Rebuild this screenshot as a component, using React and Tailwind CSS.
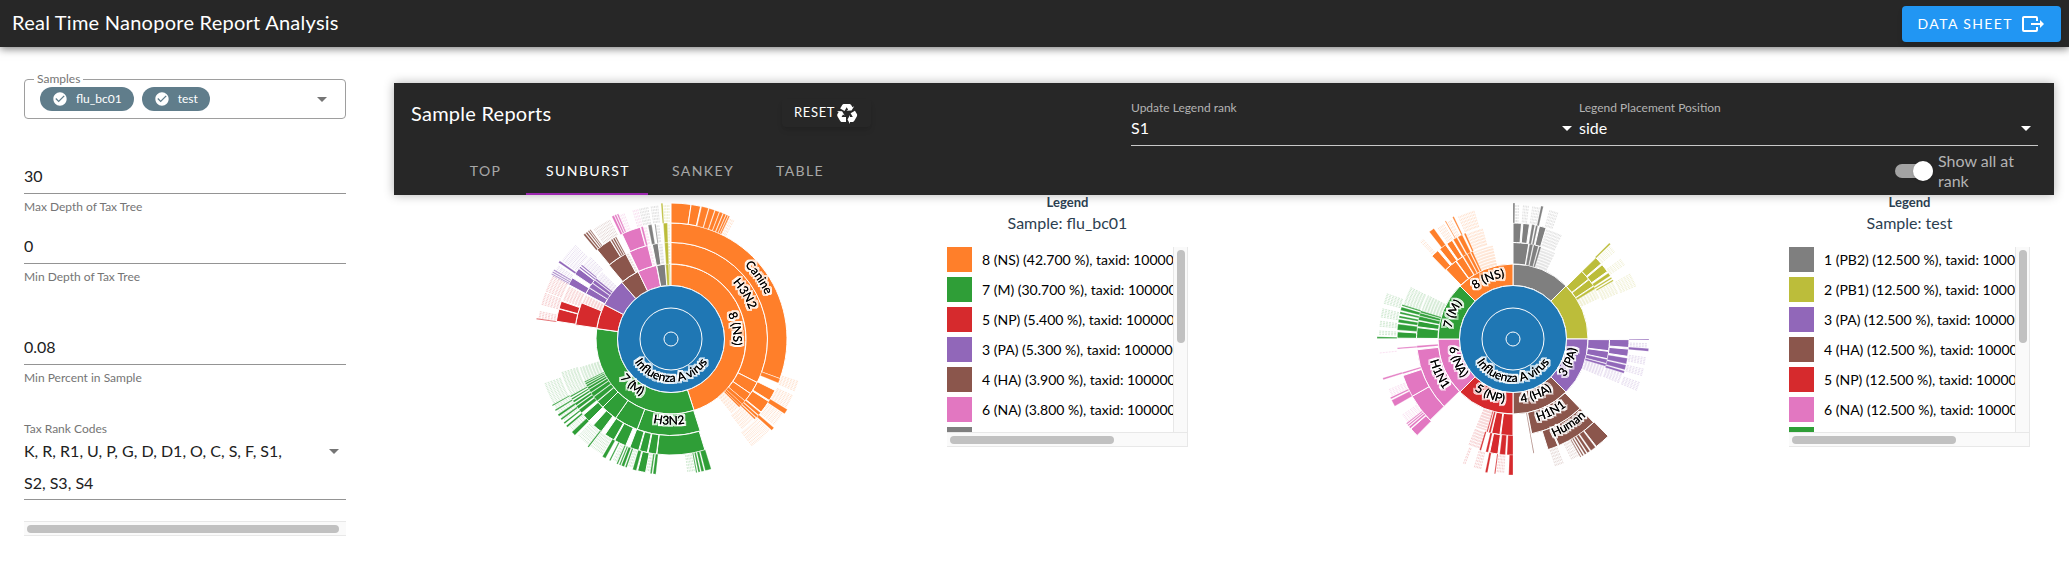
import React from "react";

const ICONS = {
  export:
    "M23,12L19,8V11H10V13H19V16M1,18V6C1,4.89 1.9,4 3,4H15A2,2 0 0,1 17,6V9H15V6H3V18H15V15H17V18A2,2 0 0,1 15,20H3A2,2 0 0,1 1,18Z",
  recycle:
    "M21.82,15.42L19.32,19.75C18.83,20.61 17.92,21.06 17,21H15V23L12.5,18.5L15,14V16H17.82L15.6,12.15L19.93,9.65L21.73,12.77C22.25,13.54 22.32,14.57 21.82,15.42M9.21,3.06H14.21C15.19,3.06 16.04,3.63 16.45,4.45L17.45,6.19L19.18,5.19L16.54,9.6L11.39,9.69L13.12,8.69L11.71,6.24L9.5,10.09L5.16,7.59L6.96,4.47C7.37,3.64 8.22,3.06 9.21,3.06M5.05,19.76L2.55,15.43C2.06,14.58 2.13,13.56 2.64,12.79L3.64,11.06L1.91,10.06L7.05,10.14L9.7,14.56L7.97,13.56L6.56,16H11V21H7.4C6.47,21.07 5.55,20.61 5.05,19.76Z",
  check:
    "M12 2C6.5 2 2 6.5 2 12S6.5 22 12 22 22 17.5 22 12 17.5 2 12 2M10 17L5 12L6.41 10.59L10 14.17L17.59 6.58L19 8L10 17Z",
  menuDown: "M7,10L12,15L17,10H7Z",
};

function Icon({ name, className }) {
  return (
    <svg viewBox="0 0 24 24" fill="currentColor" aria-hidden="true" className={className}>
      <path d={ICONS[name]} />
    </svg>
  );
}

const BLUE = "#1f77b4";
const ORANGE = "#ff7f2a";
const GREEN = "#2f9e37";
const RED = "#d62a2d";
const PURPLE = "#9167b9";
const BROWN = "#8b564c";
const PINK = "#e277c1";
const GRAY = "#7f7f7f";
const OLIVE = "#bcbd3a";

const RADII = [53.5, 75, 96.5, 116, 136];

// cells: one list per ring, [startDeg, endDeg]; fringe: [ring, startDeg, endDeg]
const FLU = [
  {
    color: ORANGE,
    cells: [
      [[0, 162.1]],
      [[0, 116.8], [116.8, 124.5], [124.5, 130], [130, 132.4], [132.4, 134], [134, 135]],
      [[0, 110], [110, 112.3], [116.3, 122], [122.6, 129], [129.5, 131], [131.4, 132.6], [133, 133.8]],
      [[0, 8.5], [8.5, 12.6], [13, 16], [16.3, 18.7], [19, 20.8], [21, 22.4], [22.7, 23.8], [24, 24.8], [25, 25.6], [121.2, 123.4], [130.8, 132.2]],
    ],
    fringe: [[3, 25.8, 28], [1, 135, 141], [2, 133.8, 142], [3, 108.5, 113], [3, 115, 121], [3, 124, 130], [3, 133, 143]],
  },
  {
    color: GREEN,
    cells: [
      [[162.1, 277.9]],
      [[162.4, 200.5], [200.5, 215], [215, 225], [225, 229.6], [230, 233], [233.4, 236], [236.4, 238.2], [238.6, 240], [240.4, 241.5], [241.9, 242.8], [243.2, 243.9]],
      [[163, 187], [187.2, 191.4], [191.8, 195.8], [196.2, 200.8], [203, 209], [209.5, 214.6], [217, 222], [225, 229], [230.5, 232.4], [233, 234.6], [235, 236.2], [236.8, 237.8], [238.4, 239.2], [239.8, 240.5]],
      [[162.8, 165.4], [165.9, 167.1], [167.6, 168.4], [168.9, 169.4], [186.4, 187.6], [188.1, 188.8], [190.8, 194.2], [194.8, 196.4], [199, 199.7], [200.2, 201.4], [201.8, 202.4], [203, 203.6], [206.4, 207], [208.8, 210.3], [217.2, 217.8], [225, 226.8], [229.6, 230.4], [231.4, 232.1], [233.5, 234.2], [235.4, 236.3], [238, 238.6], [240.5, 241]],
    ],
    fringe: [[1, 244, 253], [2, 241, 253], [3, 170, 173], [3, 189, 190.5], [3, 197, 199], [3, 204, 206], [3, 211, 217], [3, 218, 224], [3, 227, 229.4], [3, 233, 251]],
  },
  {
    color: RED,
    cells: [
      [[278, 297.3]],
      [[278.4, 292]],
      [[278.8, 285], [285.2, 289]],
      [[278.4, 278.8]],
    ],
    fringe: [[1, 292, 297], [2, 290, 297], [3, 279, 282], [3, 285, 290], [3, 291, 298]],
  },
  {
    color: PURPLE,
    cells: [
      [[297.3, 319]],
      [[298, 302], [302.3, 305.2], [305.6, 307.6], [308, 309]],
      [[298, 301.8], [304, 307.4], [307.9, 308.6], [309.2, 309.8]],
      [[298.4, 298.8], [299.3, 299.7], [300.3, 300.7], [304.2, 305.1]],
    ],
    fringe: [[1, 309, 314], [2, 309.8, 316], [3, 298, 303], [3, 306, 315]],
  },
  {
    color: BROWN,
    cells: [
      [[319, 334]],
      [[320, 332]],
      [[320.4, 328.4], [328.8, 329.6], [330, 330.8], [331.2, 331.8]],
      [[320, 320.8], [321.2, 321.9], [322.4, 322.9], [323.3, 323.7]],
    ],
    fringe: [[1, 332, 334], [3, 325, 333]],
  },
  {
    color: PINK,
    cells: [
      [[334, 348.8]],
      [[334.5, 346]],
      [[335, 344.6], [345, 346]],
      [[334.2, 335.2], [335.5, 336.2], [336.6, 337.2]],
    ],
    fringe: [[1, 346, 348], [2, 346, 348], [3, 337.4, 339.5], [3, 343.5, 346]],
  },
  {
    color: GRAY,
    cells: [
      [[349, 355.5]],
      [[348.8, 352.3]],
      [[348.6, 350.4], [351.9, 352.4]],
      [],
    ],
    fringe: [[1, 352.4, 355], [2, 352.5, 354], [3, 346.5, 350], [3, 351.5, 354.5]],
  },
  {
    color: OLIVE,
    cells: [
      [[356, 358.2], [358.6, 359.3]],
      [[356.2, 358.3]],
      [[356.2, 358.2]],
      [[355.8, 356.5]],
    ],
    fringe: [[1, 358.4, 359.4], [2, 358.4, 359.4], [3, 357, 359.4]],
  },
];

const TEST = [
  {
    color: GRAY,
    cells: [
      [[0, 45]],
      [[0, 9.4], [9.9, 12], [12.5, 15.3], [15.8, 17]],
      [[0, 4.2], [4.9, 8.2], [9.4, 10.8], [11.4, 12.4], [13.2, 16.6]],
      [[0, 0.8], [11.9, 12.9]],
    ],
    fringe: [[1, 17.4, 26], [2, 17.2, 25], [3, 1, 3], [3, 4.5, 7], [3, 8.5, 11.4], [3, 16, 20]],
  },
  {
    color: OLIVE,
    cells: [
      [[45, 90]],
      [[45.5, 51.6], [52, 56.6], [57.1, 58.6]],
      [[45.5, 49.5], [50.2, 54.4], [55.3, 57], [57.8, 58.6], [59.3, 60]],
      [[45.1, 45.8]],
    ],
    fringe: [[1, 58.8, 65], [2, 60, 67], [3, 46.5, 50], [3, 53.5, 57], [3, 61, 67]],
  },
  {
    color: PURPLE,
    cells: [
      [[90, 135]],
      [[90.4, 97], [97.4, 101.8], [102.2, 104.6], [105, 106.4]],
      [[90.3, 94.2], [95, 98.6], [99.5, 102.4], [103, 105.4], [106, 107.2]],
      [[90, 90.4], [94, 95.2]],
    ],
    fringe: [[1, 106.6, 113], [2, 107.5, 113], [3, 92, 93.5], [3, 98, 101], [3, 103, 106], [3, 109, 113]],
  },
  {
    color: BROWN,
    cells: [
      [[135, 180]],
      [[136, 168.8], [169.4, 169.9]],
      [[136, 156.6], [157.2, 162.4], [169.5, 169.9]],
      [[135.6, 142.2], [142.7, 145], [145.6, 146.8], [147.3, 148.1], [148.7, 149.3], [149.9, 150.3]],
    ],
    fringe: [[3, 150.5, 154.5], [3, 158, 162]],
  },
  {
    color: RED,
    cells: [
      [[180, 225]],
      [[180, 187.3], [187.8, 192.8], [193.4, 194.6], [195.2, 195.9]],
      [[180, 183], [183.8, 186.6], [187.5, 191.6], [192.4, 193.6], [196, 196.8]],
      [[180, 181.8], [187.4, 187.9], [190.8, 191.8]],
    ],
    fringe: [[1, 196.2, 203], [2, 197, 203], [3, 184, 187], [3, 194, 197], [3, 201, 202.2]],
  },
  {
    color: PINK,
    cells: [
      [[225, 270]],
      [[225.6, 263.6], [264.8, 266]],
      [[225.6, 240.4], [240.4, 251.6], [252.4, 253.2], [265, 265.7]],
      [[224.8, 228.6], [229, 229.8], [230.2, 230.8], [231.2, 231.7], [240.4, 243.2], [243.8, 244.5], [252.6, 253.3]],
    ],
    fringe: [[3, 232, 236], [3, 245, 248], [3, 264, 264.6]],
  },
  {
    color: GREEN,
    cells: [
      [[270, 315]],
      [[270.4, 276.8], [277.3, 280.8], [281.3, 283.6], [284, 285.6], [286, 287]],
      [[270.4, 273.6], [274.5, 277.4], [278.2, 279.8], [280.6, 281.6], [282.6, 283.6], [284.4, 286], [286.6, 287.3]],
      [[270.2, 270.9]],
    ],
    fringe: [[1, 287.2, 297], [2, 287.6, 297], [3, 272, 274], [3, 275.5, 278], [3, 279.5, 283], [3, 285.5, 290]],
  },
  {
    color: ORANGE,
    cells: [
      [[315, 360]],
      [[316, 323.6], [324, 328.6], [329.1, 331.3], [331.8, 333.6], [334.1, 335.3]],
      [[315.6, 319.6], [320.8, 324.4], [325.2, 328.3], [329, 331], [331.6, 334], [335, 335.9]],
      [[322, 324.4], [330, 330.4], [333.6, 334.2]],
    ],
    fringe: [[1, 335.5, 348], [2, 336, 345], [3, 316.5, 318.5], [3, 326, 329], [3, 331, 333], [3, 336, 343]],
  },
];

const FLU_LABELS = [
  { text: "8 (NS)", ring: 0, at: 81 },
  { text: "H3N2", ring: 1, at: 58.5 },
  { text: "Canine", ring: 2, at: 55 },
  { text: "7 (M)", ring: 0, at: 220 },
  { text: "H3N2", ring: 1, at: 181.4 },
];

const TEST_LABELS = [
  { text: "3 (PA)", ring: 0, at: 112.5 },
  { text: "4 (HA)", ring: 0, at: 157.5 },
  { text: "H1N1", ring: 1, at: 152.4 },
  { text: "Human", ring: 2, at: 147 },
  { text: "5 (NP)", ring: 0, at: 202.5 },
  { text: "6 (NA)", ring: 0, at: 247.5 },
  { text: "H1N1", ring: 1, at: 244.6 },
  { text: "7 (M)", ring: 0, at: 292.5 },
  { text: "8 (NS)", ring: 0, at: 337.5 },
];

function point(r, deg) {
  const a = (deg * Math.PI) / 180;
  return `${(r * Math.sin(a)).toFixed(2)},${(-r * Math.cos(a)).toFixed(2)}`;
}

function wedge(r0, r1, a, b) {
  const large = b - a > 180 ? 1 : 0;
  return `M${point(r1, a)}A${r1},${r1} 0 ${large} 1 ${point(r1, b)}L${point(r0, b)}A${r0},${r0} 0 ${large} 0 ${point(r0, a)}Z`;
}

function fringePath([ring, a, b]) {
  let d = "";
  for (let t = a; t < b; t += 0.7) {
    d += `M${point(RADII[ring] + 1, t)}L${point(RADII[ring + 1] - 1, t)}`;
  }
  return d;
}

// Labels on the lower half run counter-clockwise so that they stay upright.
function CurvedLabel({ id, text, radius, at }) {
  const flip = at > 90 && at < 270;
  const r = flip ? radius : radius - 2;
  const d = flip
    ? `M${point(r, at + 80)}A${r},${r} 0 0 0 ${point(r, at - 80)}`
    : `M${point(r, at - 80)}A${r},${r} 0 0 1 ${point(r, at + 80)}`;
  return (
    <>
      <path id={id} d={d} fill="none" />
      <text textAnchor="middle" fill="#000">
        <textPath href={`#${id}`} startOffset="50%">
          {text}
        </textPath>
      </text>
    </>
  );
}

function Sunburst({ id, groups, labels }) {
  return (
    <svg viewBox="-138 -138 276 276" role="img" aria-label={`Sunburst ${id}`} className="size-[276px] overflow-visible text-[12px]">
      <defs>
        <filter id={`${id}-halo`} x="-10%" y="-10%" width="120%" height="120%" colorInterpolationFilters="sRGB">
          <feMorphology in="SourceAlpha" operator="dilate" radius="1.5" result="grown" />
          <feFlood floodColor="#fff" />
          <feComposite in2="grown" operator="in" result="halo" />
          <feMerge>
            <feMergeNode in="halo" />
            <feMergeNode in="SourceGraphic" />
            <feMergeNode in="SourceGraphic" />
          </feMerge>
        </filter>
      </defs>
      {groups.map((g) => (
        <g key={g.color}>
          {g.fringe.map((f) => (
            <path key={f.join()} d={fringePath(f)} stroke={g.color} strokeWidth="0.6" strokeDasharray="2 1" opacity="0.38" fill="none" />
          ))}
          {g.cells.map((ring, i) =>
            ring.map(([a, b]) => (
              <path
                key={`${i}-${a}`}
                d={wedge(RADII[i], RADII[i + 1], a, b)}
                fill={g.color}
                stroke="#fff"
                strokeWidth={b - a > 3 ? 1 : 0.3}
              />
            ))
          )}
        </g>
      ))}
      <circle r="53.5" fill={BLUE} stroke="#fff" />
      <circle r="31" fill={BLUE} stroke="#fff" />
      <circle r="7" fill={BLUE} stroke="#fff" />
      <g filter={`url(#${id}-halo)`}>
        <CurvedLabel id={`${id}-root`} text="Influenza A virus" radius={43} at={180} />
        {labels.map((l, i) => (
          <CurvedLabel key={i} id={`${id}-label-${i}`} text={l.text} radius={(RADII[l.ring] + RADII[l.ring + 1]) / 2} at={l.at} />
        ))}
      </g>
    </svg>
  );
}

const FLU_LEGEND = [
  ["bg-[#ff7f2a]", "8 (NS) (42.700 %), taxid: 10000008"],
  ["bg-[#2f9e37]", "7 (M) (30.700 %), taxid: 10000007"],
  ["bg-[#d62a2d]", "5 (NP) (5.400 %), taxid: 10000005"],
  ["bg-[#9167b9]", "3 (PA) (5.300 %), taxid: 10000003"],
  ["bg-[#8b564c]", "4 (HA) (3.900 %), taxid: 10000004"],
  ["bg-[#e277c1]", "6 (NA) (3.800 %), taxid: 10000006"],
  ["bg-[#7f7f7f]", ""],
];

const TEST_LEGEND = [
  ["bg-[#7f7f7f]", "1 (PB2) (12.500 %), taxid: 10000001"],
  ["bg-[#bcbd3a]", "2 (PB1) (12.500 %), taxid: 10000002"],
  ["bg-[#9167b9]", "3 (PA) (12.500 %), taxid: 10000003"],
  ["bg-[#8b564c]", "4 (HA) (12.500 %), taxid: 10000004"],
  ["bg-[#d62a2d]", "5 (NP) (12.500 %), taxid: 10000005"],
  ["bg-[#e277c1]", "6 (NA) (12.500 %), taxid: 10000006"],
  ["bg-[#2f9e37]", ""],
];

function Legend({ sample, rows }) {
  return (
    <section className="w-[241px] shrink-0 text-center text-[#2c3e50]">
      <h3 className="text-[13px] leading-[14px] font-bold">Legend</h3>
      <p className="pt-1 text-base leading-5">Sample: {sample}</p>
      <div className="mt-[14px] grid grid-cols-[1fr_14px] border-r border-b border-[#e8e8e8] bg-[#fafafa]">
        <ul className="flex h-[185px] flex-col gap-[5px] overflow-hidden bg-white text-left text-sm text-black">
          {rows.map(([color, text], i) => (
            <li key={i} className="flex h-[25px] shrink-0 items-center gap-[10px] whitespace-nowrap">
              <span className={`size-[25px] shrink-0 ${color}`} />
              {text}
            </li>
          ))}
        </ul>
        <div className="border-l border-[#e8e8e8] px-[3px] pt-[3px]">
          <div className="h-[93px] w-2 rounded-full bg-[#c1c1c1]" />
        </div>
        <div className="col-span-2 h-[14px] border-t border-[#e8e8e8] px-[3px] pt-[3px]">
          <div className="h-2 w-[164px] rounded-full bg-[#c1c1c1]" />
        </div>
      </div>
    </section>
  );
}

function Chip({ children }) {
  return (
    <span className="flex h-6 items-center gap-2 rounded-full bg-[#607d8b] px-3 text-xs text-white">
      <Icon name="check" className="size-4" />
      {children}
    </span>
  );
}

function Field({ id, label, value }) {
  return (
    <div className="flex flex-col">
      <input
        id={id}
        type="text"
        inputMode="decimal"
        defaultValue={value}
        className="h-8 w-full border-b border-[#949494] bg-transparent pb-1 text-base text-[#212121] outline-none"
      />
      <label htmlFor={id} className="pt-[5px] text-xs leading-4 text-[#757575]">
        {label}
      </label>
    </div>
  );
}

function DarkSelect({ id, label, value, options, className }) {
  return (
    <div className={`min-w-0 border-b border-[#c8c8c8] ${className}`}>
      <label htmlFor={id} className="block text-xs leading-4 text-[#b3b3b3]">
        {label}
      </label>
      <div className="flex h-[29px] items-start">
        <select id={id} defaultValue={value} className="h-6 min-w-0 flex-1 appearance-none bg-transparent text-base text-white outline-none">
          {options.map((o) => (
            <option key={o}>{o}</option>
          ))}
        </select>
        <Icon name="menuDown" className="-ml-6 size-6 text-white" />
      </div>
    </div>
  );
}

const TABS = [
  { name: "Top", cls: "w-[83px] text-white/60" },
  { name: "Sunburst", cls: "w-[122px] text-white shadow-[inset_0_-2px_0_#9c27b0]" },
  { name: "Sankey", cls: "w-[108px] text-white/60" },
  { name: "Table", cls: "w-[86px] text-white/60" },
];

export default function App() {
  return (
    <div className="min-h-screen bg-white font-['Lato','Noto_Sans',sans-serif]">
      <header className="flex h-[47px] items-center justify-between bg-[#272727] pr-2 pl-3 text-white shadow-[0_2px_8px_rgba(0,0,0,0.5)]">
        <h1 className="pb-1 text-xl tracking-[0.0125em]">Real Time Nanopore Report Analysis</h1>
        <button type="button" className="flex h-9 items-center gap-2 rounded bg-[#2196f3] px-4 text-sm tracking-widest shadow-md">
          DATA SHEET
          <Icon name="export" className="size-6" />
        </button>
      </header>

      <div className="flex">
        <aside className="flex w-[370px] shrink-0 flex-col px-6 pt-6">
          <fieldset className="flex h-12 flex-col rounded border border-[#9e9e9e] px-2">
            <legend className="ml-px px-[3px] text-xs leading-4 text-[#757575]">Samples</legend>
            <button type="button" aria-label="Samples" className="flex items-center gap-2 pr-[3px] pl-[7px] text-left">
              <Chip>flu_bc01</Chip>
              <Chip>test</Chip>
              <Icon name="menuDown" className="ml-auto size-6 text-[#757575]" />
            </button>
          </fieldset>

          <div className="flex flex-col gap-[17px] pt-[43px]">
            <Field id="max-depth" label="Max Depth of Tax Tree" value="30" />
            <Field id="min-depth" label="Min Depth of Tax Tree" value="0" />
          </div>
          <div className="pt-12">
            <Field id="min-percent" label="Min Percent in Sample" value="0.08" />
          </div>

          <div className="flex flex-col pt-[37px]">
            <span id="rank-codes" className="text-xs leading-3 text-[#757575]">
              Tax Rank Codes
            </span>
            <button
              type="button"
              aria-labelledby="rank-codes"
              className="flex items-start border-b border-[#949494] text-left text-base leading-8 text-[#212121]"
            >
              <span className="min-w-0 flex-1 pr-5">K, R, R1, U, P, G, D, D1, O, C, S, F, S1, S2, S3, S4</span>
              <Icon name="menuDown" className="mt-1 size-6 text-[#757575]" />
            </button>
          </div>

          <div className="mt-[21px] h-[15px] border-y border-[#e8e8e8] bg-[#fafafa] py-[3px] pr-[7px] pl-[3px]">
            <div className="h-2 rounded-full bg-[#c1c1c1]" />
          </div>
        </aside>

        <main className="min-w-0 flex-1 pt-9 pr-[15px]">
          <section className="ml-6 bg-[#272727] text-white shadow-[0_0_10px_rgba(0,0,0,0.3)]">
            <div className="flex h-16 items-start pr-4 pl-[17px]">
              <h2 className="w-[371px] pt-4 text-xl leading-7 tracking-[0.0125em]">Sample Reports</h2>
              <button type="button" className="mt-4 flex h-7 items-center rounded px-3 text-[13px] tracking-wider shadow-md">
                RESET
                <Icon name="recycle" className="size-6" />
              </button>
              <div className="ml-auto flex w-[907px] pt-[17px]">
                <DarkSelect id="legend-rank" label="Update Legend rank" value="S1" options={["S1", "S2", "S3", "S4"]} className="w-[448px]" />
                <DarkSelect id="legend-position" label="Legend Placement Position" value="side" options={["side", "bottom"]} className="flex-1" />
              </div>
            </div>
            <div className="flex h-12 items-center justify-between pr-6 pl-[49px]">
              <div role="tablist" className="flex h-12">
                {TABS.map((t) => (
                  <button key={t.name} type="button" role="tab" aria-selected={t.name === "Sunburst"} className={`pl-[2px] text-sm tracking-widest uppercase ${t.cls}`}>
                    {t.name}
                  </button>
                ))}
              </div>
              <label className="flex w-[135px] items-center gap-[5px] text-base leading-5 text-[#b3b3b3]">
                <input type="checkbox" defaultChecked className="sr-only" />
                <span className="flex h-[14px] w-[38px] shrink-0 items-center justify-end rounded-full bg-[#a3a3a3]">
                  <span className="size-5 rounded-full bg-white shadow" />
                </span>
                Show all at rank
              </label>
            </div>
          </section>

          <div className="grid grid-cols-2">
            <div className="flex px-6">
              <div className="flex flex-1 justify-center pt-[6px]">
                <Sunburst id="flu_bc01" groups={FLU} labels={FLU_LABELS} />
              </div>
              <Legend sample="flu_bc01" rows={FLU_LEGEND} />
            </div>
            <div className="flex px-6">
              <div className="flex flex-1 justify-center pt-[6px]">
                <Sunburst id="test" groups={TEST} labels={TEST_LABELS} />
              </div>
              <Legend sample="test" rows={TEST_LEGEND} />
            </div>
          </div>
        </main>
      </div>
    </div>
  );
}
